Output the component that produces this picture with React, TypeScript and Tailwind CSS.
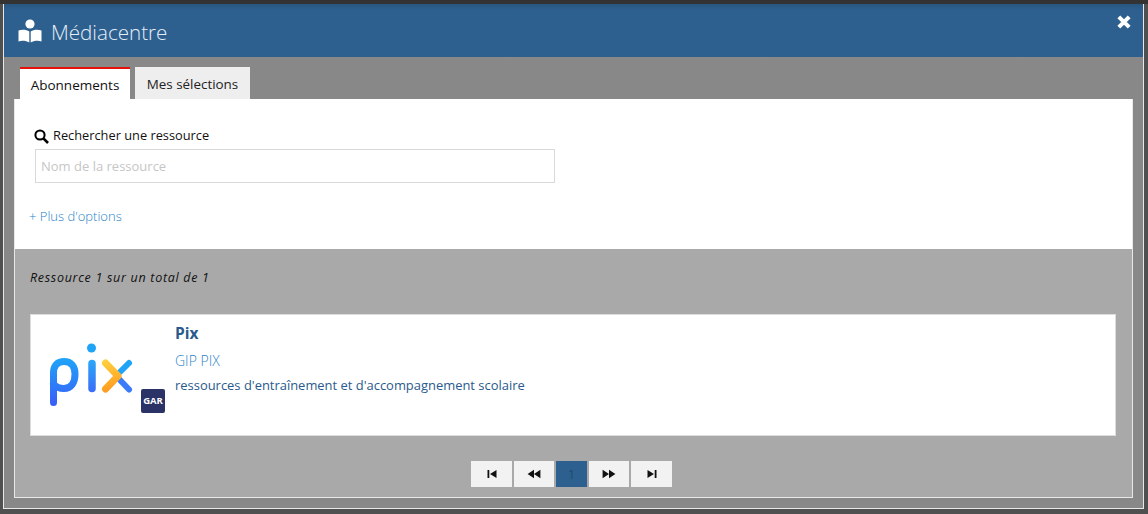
import React from "react";

function PagerBtn({ children, w }: { children: React.ReactNode; w: string }) {
  return <div className={`${w} h-[26px] bg-[#f2f2f2] flex items-center justify-center`}>{children}</div>;
}

function Tri({ d }: { d: string }) {
  return (
    <svg width="14" height="10" viewBox="0 0 14 10" fill="#111111">
      <path d={d} />
    </svg>
  );
}

export default function App() {
  return (
    <div className="w-[1148px] h-[514px] bg-[#505050] overflow-hidden font-['Open_Sans',sans-serif] flex flex-col">
      <div className="h-[4px] bg-[#333333] shrink-0" />
      <div className="ml-[3px] mr-[4px] h-[505px] border-x border-b border-[#e8e8e8] bg-[#888888] flex flex-col shrink-0">
        <div className="h-[53px] bg-gradient-to-b from-[#285680] to-[#2d5f8f] to-[12%] shrink-0 flex items-center pl-[14px] pr-[15px] relative">
          <svg width="24" height="24" viewBox="0 0 24 24" fill="#ffffff" className="mr-[9px] mt-[1px]">
            <circle cx="12" cy="5" r="4.6" />
            <path d="M0.5 11.6 C4 10.2 8.5 10.6 11.3 12.6 V23.6 C8.5 21.8 4 21.4 0.5 22.4 Z" />
            <path d="M23.5 11.6 C20 10.2 15.5 10.6 12.7 12.6 V23.6 C15.5 21.8 20 21.4 23.5 22.4 Z" />
          </svg>
          <span className="text-[20.6px] leading-none text-[#e4eef6] font-light mt-[3px]">Médiacentre</span>
          <svg width="16" height="16" viewBox="0 0 16 16" className="absolute right-[11px] top-[10px]">
            <path d="M2.8 2.8 L13.2 13.2 M13.2 2.8 L2.8 13.2" stroke="#ffffff" strokeWidth="4" />
          </svg>
        </div>
        <div className="h-[42px] shrink-0 flex items-end pl-[16px] gap-[5px] pt-[10px]">
          <div className="w-[110px] h-[32px] bg-white border-t-2 border-[#e3120b] flex items-center justify-center pt-[2px] text-[13.5px] text-[#111111]">Abonnements</div>
          <div className="w-[115px] h-[32px] bg-[#eeeeee] flex items-center justify-center pt-[2px] text-[13.4px] text-[#222222]">Mes sélections</div>
        </div>
        <div className="mx-[10px] h-[399px] border border-[#e8e8e8] border-t-0 flex flex-col shrink-0">
          <div className="h-[150px] bg-white shrink-0 pl-[20px] pt-[28px] flex flex-col">
            <div className="-ml-[1px] flex items-center gap-[4px] h-[18px] text-[12.8px] text-[#111111]">
              <svg width="15" height="15" viewBox="0 0 15 15" fill="none" stroke="#000000">
                <circle cx="6" cy="6" r="4.6" strokeWidth="2" />
                <path d="M9.4 9.4 L14 14" strokeWidth="2.6" />
              </svg>
              Rechercher une ressource
            </div>
            <div className="mt-[4px] w-[520px] h-[34px] border border-[#d9d9d9] bg-white flex items-center pl-[5px] pt-[2px] text-[13px] text-[#c6c6c6]">Nom de la ressource</div>
            <div className="mt-[25px] -ml-[6px] h-[18px] flex items-center text-[13px] font-light text-[#2a84c8]">+ Plus d'options</div>
          </div>
          <div className="flex-1 bg-[#a9a9a9] flex flex-col pl-[15px] pr-[16px]">
            <div className="mt-[20px] h-[18px] flex items-center text-[12.5px] italic text-[#111111] tracking-[0.7px]">Ressource 1 sur un total de 1</div>
            <div className="mt-[27px] h-[122px] bg-white border border-[#dddddd] flex shrink-0">
              <div className="w-[144px] h-full shrink-0 relative">
                <svg width="88" height="70" viewBox="0 0 88 70" className="absolute left-[17px] top-[25px]">
                  <defs>
                    <linearGradient id="pb" gradientUnits="userSpaceOnUse" x1="0" y1="18" x2="0" y2="66">
                      <stop offset="0" stopColor="#1fa4f8" />
                      <stop offset="1" stopColor="#3a5cf8" />
                    </linearGradient>
                    <linearGradient id="pb2" gradientUnits="userSpaceOnUse" x1="0" y1="20" x2="0" y2="52">
                      <stop offset="0" stopColor="#2aa8f8" />
                      <stop offset="1" stopColor="#3a6cf8" />
                    </linearGradient>
                    <linearGradient id="py" gradientUnits="userSpaceOnUse" x1="54" y1="20" x2="60" y2="52">
                      <stop offset="0" stopColor="#ffd23f" />
                      <stop offset="1" stopColor="#ff9a1f" />
                    </linearGradient>
                  </defs>
                  <path d="M5.5 62.5 V33 C5.5 25 10 21.5 16 21.5 C23 21.5 27 26 27 34 C27 43 23 48.5 16 48.5 C12 48.5 8 47 5.5 44" fill="none" stroke="url(#pb)" strokeWidth="7" strokeLinecap="round" />
                  <path d="M44 23.5 V48.5" fill="none" stroke="url(#pb2)" strokeWidth="7.5" strokeLinecap="round" />
                  <circle cx="43.5" cy="8" r="4.5" fill="#1fa4f8" />
                  <path d="M81 23 L72 32" fill="none" stroke="#1fa4f8" strokeWidth="6" strokeLinecap="round" />
                  <path d="M72 40 L81 49.5" fill="none" stroke="#3a7cf8" strokeWidth="6" strokeLinecap="round" />
                  <path d="M57.5 23 L70 36 L57.5 49" fill="none" stroke="url(#py)" strokeWidth="7" strokeLinecap="round" strokeLinejoin="round" />
                </svg>
                <div className="absolute left-[110px] top-[74px] w-[24px] h-[24px] rounded-[2px] bg-[#2b3266] flex items-center justify-center text-[9.5px] font-bold text-white">GAR</div>
              </div>
              <div className="flex flex-col pt-[9px]">
                <div className="h-[20px] flex items-center text-[15.5px] font-bold text-[#2a5a8c]">Pix</div>
                <div className="mt-[7px] h-[18px] flex items-center text-[14px] font-light text-[#2a84c8]">GIP PIX</div>
                <div className="mt-[8px] h-[18px] flex items-center text-[12.95px] text-[#2a5a8c]">ressources d'entraînement et d'accompagnement scolaire</div>
              </div>
            </div>
            <div className="mt-[25px] ml-[441px] flex gap-[2px]">
              <PagerBtn w="w-[41px]"><Tri d="M2.5 1 H4.3 V9 H2.5 Z M11.5 1 V9 L5 5 Z" /></PagerBtn>
              <PagerBtn w="w-[40px]"><Tri d="M7 0.8 V9.2 L0.6 5 Z M13.4 0.8 V9.2 L7 5 Z" /></PagerBtn>
              <div className="w-[31px] h-[26px] bg-[#2d5f8f] flex items-center justify-center text-[13.5px] font-light text-[#1c3f63]">1</div>
              <PagerBtn w="w-[40px]"><Tri d="M0.6 0.8 V9.2 L7 5 Z M7 0.8 V9.2 L13.4 5 Z" /></PagerBtn>
              <PagerBtn w="w-[41px]"><Tri d="M2.5 1 V9 L9 5 Z M9.7 1 H11.5 V9 H9.7 Z" /></PagerBtn>
            </div>
          </div>
        </div>
      </div>
    </div>
  );
}
